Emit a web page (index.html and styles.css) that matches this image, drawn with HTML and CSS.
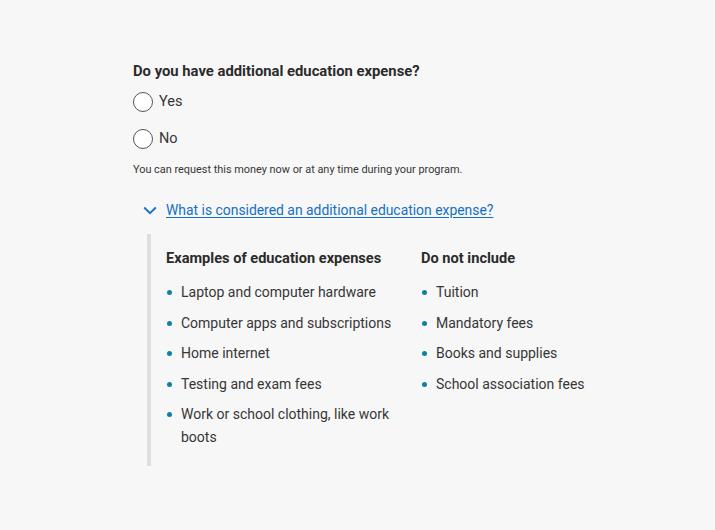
FILE: index.html
```html
<!DOCTYPE html>
<html lang="en">
<head>
<meta charset="utf-8">
<link rel="stylesheet" href="styles.css">
</head>
<body>
<main class="page">
  <fieldset class="question">
    <legend class="q-title">Do you have additional education expense?</legend>
    <label class="radio"><span class="circle"></span><span>Yes</span></label>
    <label class="radio"><span class="circle"></span><span>No</span></label>
  </fieldset>
  <p class="hint">You can request this money now or at any time during your program.</p>
  <div class="details">
    <div class="summary">
      <svg class="chev" width="14" height="9" viewBox="0 0 14 9"><path d="M1.2 1.5 L7 7.2 L12.8 1.5" fill="none" stroke="#1570c4" stroke-width="1.8"/></svg>
      <a class="link" href="#">What is considered an additional education expense?</a>
    </div>
    <div class="panel">
      <div class="col col-a">
        <h3 class="col-title">Examples of education expenses</h3>
        <ul class="list">
          <li>Laptop and computer hardware</li>
          <li>Computer apps and subscriptions</li>
          <li>Home internet</li>
          <li>Testing and exam fees</li>
          <li>Work or school clothing, like work boots</li>
        </ul>
      </div>
      <div class="col col-b">
        <h3 class="col-title">Do not include</h3>
        <ul class="list">
          <li>Tuition</li>
          <li>Mandatory fees</li>
          <li>Books and supplies</li>
          <li>School association fees</li>
        </ul>
      </div>
    </div>
  </div>
</main>
</body>
</html>
```

FILE: styles.css
```css
html, body {
  margin: 0;
  padding: 0;
  background: #f7f7f7;
}
body {
  font-family: Roboto, "Liberation Sans", sans-serif;
  color: #363636;
}
.page {
  padding: 61px 0 0 133px;
}
.question {
  border: 0;
  margin: 0;
  padding: 0;
}
.q-title {
  padding: 0;
  font-size: 14.8px;
  font-weight: 700;
  line-height: 20px;
  color: #2b2b2b;
  margin-bottom: 10px;
}
.radio {
  display: flex;
  align-items: center;
  gap: 6px;
  height: 21px;
  margin-bottom: 16px;
  font-size: 14.5px;
  color: #363636;
}
.circle {
  width: 18px;
  height: 18px;
  border: 1px solid #555;
  border-radius: 50%;
  background: #fff;
  box-sizing: content-box;
}
.hint {
  margin: -3px 0 0;
  font-size: 10.9px;
  line-height: 16px;
  color: #363636;
}
.details {
  margin-top: 22px;
  margin-left: 10px;
}
.summary {
  display: flex;
  align-items: center;
  gap: 9px;
  height: 20px;
}
.chev {
  display: block;
}
.link {
  font-size: 13.9px;
  color: #1570c4;
  text-decoration: underline;
  text-underline-offset: 2px;
  text-decoration-thickness: 1px;
}
.panel {
  margin-top: 14px;
  margin-left: 4px;
  border-left: 4px solid #dedede;
  padding: 14px 0 9px 15px;
  display: flex;
}
.col-a {
  width: 255px;
}
.col-b {
  width: 200px;
}
.col-title {
  margin: 0 0 13px;
  font-size: 14.6px;
  font-weight: 700;
  line-height: 20px;
  color: #2b2b2b;
}
.list {
  list-style: none;
  margin: 0;
  padding: 0;
}
.list li {
  position: relative;
  padding-left: 15px;
  font-size: 14px;
  line-height: 23px;
  margin-bottom: 7.5px;
  color: #363636;
  width: 215px;
}
.list li::before {
  content: "";
  position: absolute;
  left: 1px;
  top: 9px;
  width: 5px;
  height: 5px;
  border-radius: 50%;
  background: #0f80a3;
}
```
